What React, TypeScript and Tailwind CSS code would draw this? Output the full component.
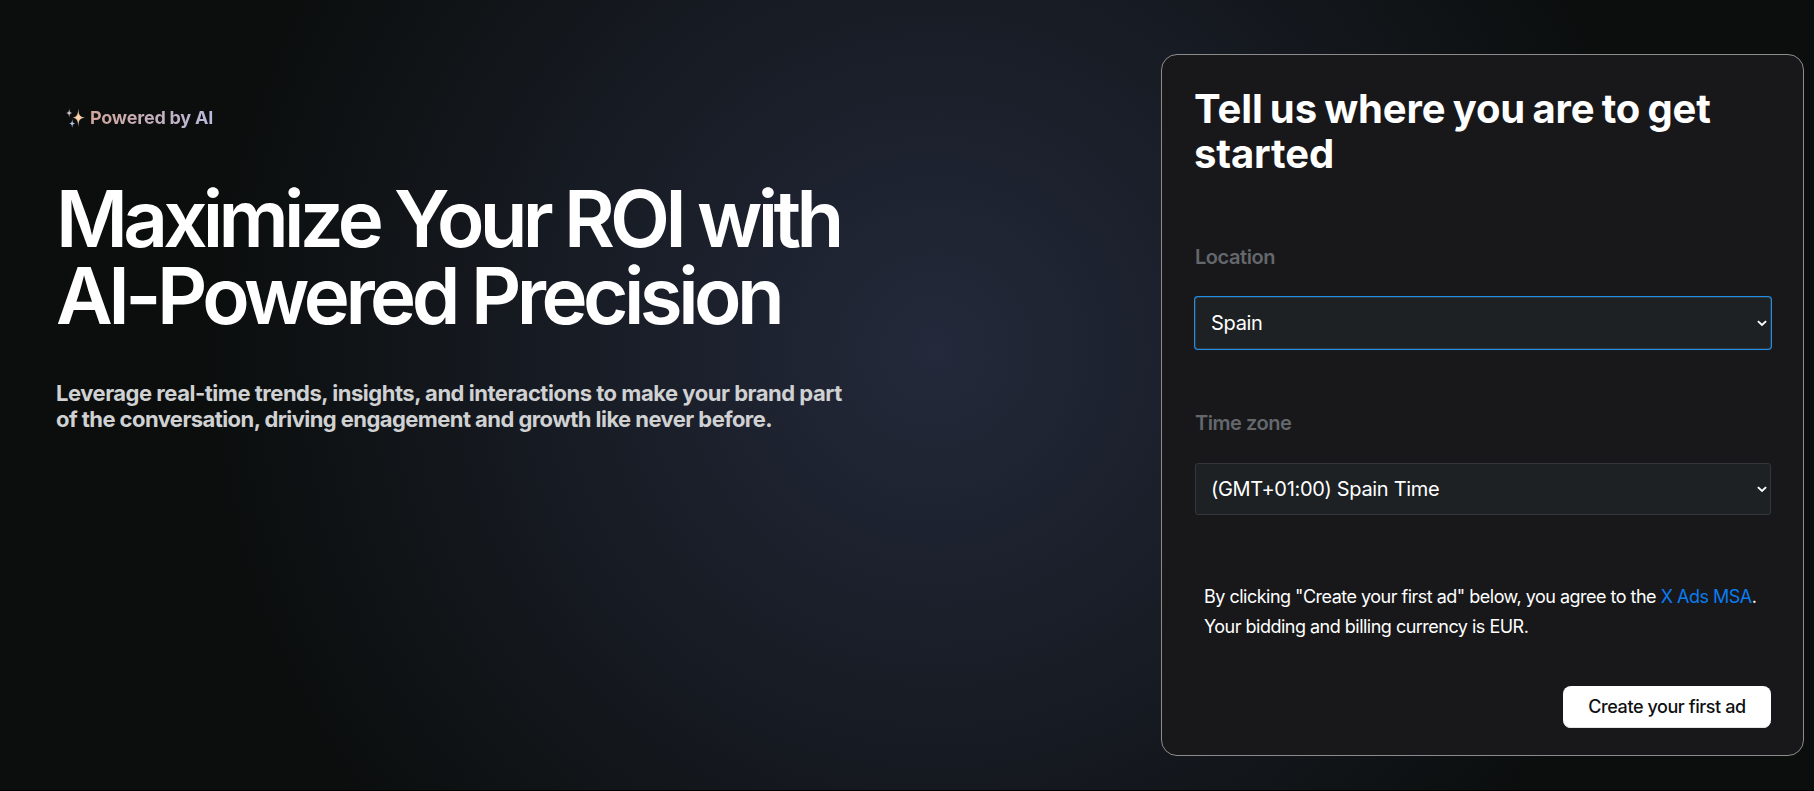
import { useState } from 'react';

interface SelectFieldProps {
  id: string;
  label: string;
  value: string;
  options: string[];
  focused?: boolean;
  onChange: (value: string) => void;
}

const locations = ['Spain', 'France', 'Germany', 'United Kingdom', 'United States'];
const timeZones = ['(GMT+01:00) Spain Time', '(GMT+00:00) London', '(GMT-05:00) Eastern Time'];

function Sparkles() {
  return (
    <svg width="20" height="20" viewBox="0 0 20 20">
      <defs>
        <radialGradient id="spark" cx="12.3" cy="9.6" r="8.5" gradientUnits="userSpaceOnUse">
          <stop offset="0" stopColor="#ffd9b0" />
          <stop offset="0.5" stopColor="#e9bd9c" />
          <stop offset="1" stopColor="#b9a9ae" />
        </radialGradient>
      </defs>
      <path
        d="M12.3 0.2C12.8 6.8 13.4 8.7 19 9.6C13.4 10.5 12.8 12.4 12.3 19C11.8 12.4 11.2 10.5 6.6 9.6C11.2 8.7 11.8 6.8 12.3 0.2Z"
        fill="url(#spark)"
      />
      <path d="M3.2 0.6C3.5 3.8 3.9 4.6 6.2 5.1C3.9 5.6 3.5 6.4 3.2 9.6C2.9 6.4 2.5 5.6 0.2 5.1C2.5 4.6 2.9 3.8 3.2 0.6Z" fill="#cfc3cb" />
      <path d="M6.2 11C6.5 14.3 6.9 15 9.2 15.5C6.9 16 6.5 16.7 6.2 20C5.9 16.7 5.5 16 3.2 15.5C5.5 15 5.9 14.3 6.2 11Z" fill="#b3bde0" />
    </svg>
  );
}

function SelectField({ id, label, value, options, focused, onChange }: SelectFieldProps) {
  return (
    <div>
      <label htmlFor={id} className="block text-[20px] leading-6 font-semibold tracking-[-0.45px] text-[#64686d]">
        {label}
      </label>
      <div className="relative mt-7">
        <select
          id={id}
          value={value}
          onChange={(e) => onChange(e.target.value)}
          className={`block h-[52px] w-full appearance-none rounded-[3px] border border-[#34373a] bg-[#1e2124] pl-[15px] text-[20px] tracking-[-0.32px] text-white outline-none ${
            focused ? 'ring-1 ring-[#1d8fec]' : ''
          }`}
        >
          {options.map((option) => (
            <option key={option}>{option}</option>
          ))}
        </select>
        <svg
          className="pointer-events-none absolute top-[23px] right-1"
          width="10"
          height="7"
          viewBox="0 0 10 7"
          fill="none"
          stroke="white"
          strokeWidth="1.9"
        >
          <path d="M0.9 1.1L5 5L9.1 1.1" />
        </svg>
      </div>
    </div>
  );
}

export default function App() {
  const [location, setLocation] = useState('Spain');
  const [timeZone, setTimeZone] = useState('(GMT+01:00) Spain Time');

  return (
    <main className="flex h-[791px] w-[1814px] items-start justify-between overflow-hidden border-b border-black bg-[radial-gradient(circle_735px_at_935px_350px,#24293b_0%,#0b0e0d_100%)] pr-[10px] pl-[56px] font-['Inter',sans-serif] text-white">
      {/* Hero */}
      <section className="pt-[106px]">
        <div className="flex h-6 items-center gap-1 pl-[10px]">
          <Sparkles />
          <span className="bg-linear-to-r from-[#d0a49b] to-[#b9b9dc] bg-clip-text text-[18px] leading-6 font-bold tracking-[-0.22px] text-transparent">
            Powered by AI
          </span>
        </div>
        <h1 className="mt-[50px] text-[78px] leading-[77px] font-semibold whitespace-nowrap">
          <span className="block tracking-[-4.75px]">Maximize Your ROI with</span>
          <span className="block tracking-[-4.53px]">AI-Powered Precision</span>
        </h1>
        <p className="mt-[46px] text-[22px] leading-[26px] font-bold whitespace-nowrap text-[#d0d1d2]">
          <span className="block tracking-[-0.48px]">
            Leverage real-time trends, insights, and interactions to make your brand part
          </span>
          <span className="block tracking-[-0.57px]">
            of the conversation, driving engagement and growth like never before.
          </span>
        </p>
      </section>

      {/* Account setup */}
      <section className="mt-[54px] h-[702px] w-[643px] rounded-2xl border border-[#8c8c8d] bg-[#18181a] pt-[31px] pr-8 pl-[33px]">
        <h2 className="-ml-px text-[40px] leading-[45px] font-bold tracking-[-0.12px] [word-spacing:-2.1px]">
          Tell us where you are to get
          <br />
          started
        </h2>
        <div className="mt-[69px] flex flex-col gap-[62px]">
          <SelectField id="location" label="Location" value={location} options={locations} focused onChange={setLocation} />
          <SelectField id="timezone" label="Time zone" value={timeZone} options={timeZones} onChange={setTimeZone} />
        </div>
        <p className="mt-[67px] pl-[9px] text-[18px] leading-[30px] tracking-[-0.51px] whitespace-nowrap">
          By clicking "Create your first ad" below, you agree to the{' '}
          <a href="#" className="text-[#0a7cf0]">
            X Ads MSA
          </a>
          .
          <br />
          Your bidding and billing currency is EUR.
        </p>
        <div className="mt-11 flex justify-end">
          <button className="h-[42px] w-[208px] rounded-lg bg-white pb-px text-[18px] font-medium tracking-[-0.43px] text-[#0f1012] shadow-[inset_0_-1px_0_#e4e4e4]">
            Create your first ad
          </button>
        </div>
      </section>
    </main>
  );
}
